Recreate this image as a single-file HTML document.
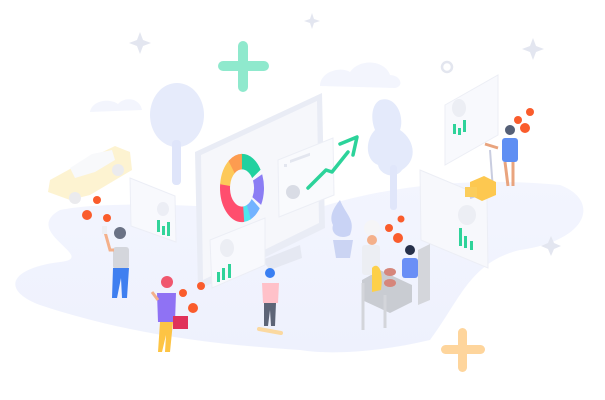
<!DOCTYPE html>
<html><head><meta charset="utf-8"><style>
html,body{margin:0;padding:0;background:#fff;width:605px;height:400px;overflow:hidden}
svg{display:block}
</style></head><body>
<svg width="605" height="400" viewBox="0 0 605 400" xmlns="http://www.w3.org/2000/svg">
<defs>
<linearGradient id="g" x1="0" y1="0" x2="0" y2="1"><stop offset="0" stop-color="#f3f5fe"/><stop offset="1" stop-color="#eef1fd"/></linearGradient>
</defs>
<!-- ground -->
<path d="M60 210 C110 200 220 205 300 215 C360 190 460 175 560 185 C600 200 590 240 520 250 C470 262 460 300 430 340 C380 352 330 355 300 350 C220 345 130 335 40 305 C0 290 10 268 60 262 C100 258 20 232 60 210Z" fill="url(#g)"/>
<!-- clouds -->
<path d="M320 86 C320 72 340 66 350 72 C360 58 385 60 390 75 C400 75 405 86 395 88 Z" fill="#f3f5fd"/>
<path d="M90 112 C92 100 110 98 118 104 C125 96 140 98 142 110 Z" fill="#f3f5fd"/>
<!-- sparkles -->
<g fill="#e3e6f0">
<path d="M140 32 l3 8 8 3 -8 3 -3 8 -3 -8 -8 -3 8 -3z"/>
<path d="M312 13 l2 6 6 2 -6 2 -2 6 -2 -6 -6 -2 6 -2z"/>
<path d="M533 38 l3 8 8 3 -8 3 -3 8 -3 -8 -8 -3 8 -3z"/>
<path d="M551 236 l3 7 7 3 -7 3 -3 7 -3 -7 -7 -3 7 -3z"/>
</g>
<circle cx="447" cy="67" r="5" fill="none" stroke="#e3e6ef" stroke-width="2.5"/>
<!-- plus signs -->
<g fill="#8fe9cd"><rect x="238" y="41" width="10" height="51" rx="5"/><rect x="218" y="61" width="51" height="10" rx="5"/></g>
<g fill="#fed59c"><rect x="458" y="328" width="9" height="44" rx="4.5"/><rect x="441" y="345" width="44" height="9" rx="4.5"/></g>
<!-- trees -->
<ellipse cx="177" cy="115" rx="27" ry="32" fill="#e6ebfb"/>
<rect x="172" y="140" width="9" height="45" rx="4" fill="#dfe5fa"/>
<path d="M380 100 C395 95 405 115 400 130 C415 140 418 160 402 170 C395 180 380 175 378 165 C365 160 365 140 375 130 C370 118 372 104 380 100Z" fill="#e4eafb"/>
<rect x="390" y="165" width="7" height="45" rx="3" fill="#e0e6fa"/>
<!-- taxi -->
<g opacity="0.85">
<path d="M50 180 L90 158 L115 146 L130 152 L132 170 L90 195 L70 200 L48 192Z" fill="#fdf1c9"/>
<path d="M70 168 L92 154 L112 150 L115 160 L95 172 L75 178Z" fill="#f7f8fb"/>
<circle cx="75" cy="198" r="6" fill="#e8e8ec"/><circle cx="118" cy="170" r="6" fill="#e8e8ec"/>
</g>
<!-- left card -->
<path d="M130 178 L175 196 L176 242 L131 226Z" fill="#f8f9fd" stroke="#eceef6"/>
<g fill="#33d49a"><rect x="157" y="220" width="3" height="12"/><rect x="162" y="226" width="3" height="9"/><rect x="167" y="222" width="3" height="14"/></g>
<ellipse cx="163" cy="209" rx="6" ry="7" fill="#eceef5"/>
<!-- monitor -->
<path d="M195 152 L322 93 L325 228 L198 290Z" fill="#e9ecf5"/>
<path d="M201 155 L317 101 L319 223 L203 280Z" fill="#f6f7fb"/>
<path d="M262 260 L300 245 L302 258 L270 270Z" fill="#e5e8f2"/>
<!-- donut -->
<g transform="translate(242,188) scale(1,1.55)">
<g fill="none" stroke-width="10">
<circle r="17" pathLength="360" stroke="#21d19f" stroke-dasharray="58 302" transform="rotate(-90)"/>
<circle r="17" pathLength="360" stroke="#8b7df4" stroke-dasharray="52 308" transform="rotate(-22)"/>
<circle r="17" pathLength="360" stroke="#72b3ff" stroke-dasharray="30 330" transform="rotate(38)"/>
<circle r="17" pathLength="360" stroke="#4ee6ee" stroke-dasharray="18 342" transform="rotate(68)"/>
<circle r="17" pathLength="360" stroke="#ff4e6e" stroke-dasharray="102 258" transform="rotate(86)"/>
<circle r="17" pathLength="360" stroke="#fdc95a" stroke-dasharray="46 314" transform="rotate(188)"/>
<circle r="17" pathLength="360" stroke="#fd9c50" stroke-dasharray="36 324" transform="rotate(234)"/>
</g></g>
<!-- right panel on monitor -->
<path d="M278 160 L333 138 L334 195 L279 217Z" fill="#f9fafd" stroke="#eceef5"/>
<g fill="#e3e6ef"><rect x="284" y="164" width="3" height="3"/><rect x="290" y="160" width="20" height="3" transform="skewY(-20)" transform-origin="290 160"/></g>
<circle cx="293" cy="192" r="7" fill="#d9dce5"/>
<path d="M308 188 L326 170 L332 172 L348 152" fill="none" stroke="#2cd39a" stroke-width="3.5" stroke-linecap="round" stroke-linejoin="round"/>
<path d="M340 144 L357 137 L353 155" fill="none" stroke="#2cd39a" stroke-width="3.5" stroke-linecap="round" stroke-linejoin="round"/>
<!-- lower card -->
<path d="M210 240 L265 218 L265 265 L212 288Z" fill="#f8f9fd" stroke="#eceef5"/>
<ellipse cx="227" cy="248" rx="7" ry="9" fill="#eceef4"/>
<g fill="#2fd39a"><rect x="217" y="272" width="3" height="10"/><rect x="222" y="268" width="3" height="12"/><rect x="228" y="264" width="3" height="14"/></g>
<!-- plant -->
<path d="M340 200 C346 215 356 220 350 235 C342 240 330 235 333 225 C328 215 336 205 340 200Z" fill="#c9d3f5"/>
<path d="M333 240 L353 240 L350 258 L336 258Z" fill="#cbd4f3"/>
<!-- top right card -->
<path d="M445 105 L498 75 L498 135 L445 165Z" fill="#f8f9fd" stroke="#eceef5"/>
<ellipse cx="459" cy="108" rx="7" ry="9" fill="#eceef4"/>
<g fill="#2fd39a"><rect x="453" y="124" width="3" height="10"/><rect x="458" y="128" width="3" height="7"/><rect x="463" y="120" width="3" height="12"/></g>
<!-- big right card -->
<path d="M420 170 L487 198 L488 268 L421 240Z" fill="#f7f8fc" stroke="#eceef5"/>
<ellipse cx="467" cy="215" rx="9" ry="10" fill="#eceef4"/>
<g fill="#2fd39a"><rect x="459" y="228" width="3" height="18"/><rect x="464" y="236" width="3" height="12"/><rect x="470" y="241" width="3" height="9"/></g>
<!-- coins -->
<g fill="#fa5c2c">
<circle cx="97" cy="200" r="4"/><circle cx="87" cy="215" r="5"/><circle cx="107" cy="218" r="4"/>
<circle cx="183" cy="293" r="4"/><circle cx="201" cy="286" r="4"/><circle cx="193" cy="308" r="5"/>
<circle cx="518" cy="120" r="4"/><circle cx="530" cy="112" r="4"/><circle cx="525" cy="128" r="5"/>
<circle cx="389" cy="228" r="4"/><circle cx="401" cy="219" r="3.5"/><circle cx="398" cy="238" r="5"/>
</g>
<!-- man with phone -->
<rect x="113" y="247" width="16" height="22" rx="3" fill="#d4d6dc"/>
<circle cx="120" cy="233" r="6" fill="#6b7285"/>
<path d="M113 268 L129 268 L127 298 L122 298 L121 278 L117 298 L112 298Z" fill="#3f7ff0"/>
<path d="M105 232 L110 250 L114 250" stroke="#f4b08a" stroke-width="3" fill="none"/>
<rect x="102" y="226" width="5" height="8" fill="#eceef3"/>
<!-- woman with basket -->
<circle cx="167" cy="282" r="6" fill="#f0576e"/>
<path d="M157 293 L176 293 L175 322 L158 322Z" fill="#8f72f4"/>
<path d="M160 322 L173 322 L170 352 L165 352 L166 335 L162 352 L158 352Z" fill="#fdc444"/>
<path d="M152 292 L158 300" stroke="#f4b08a" stroke-width="3"/>
<rect x="173" y="316" width="15" height="13" fill="#e0315a"/>
<!-- skater -->
<circle cx="270" cy="273" r="5" fill="#3a7ff2"/>
<path d="M262 283 L279 283 L278 303 L263 303Z" fill="#ffc1c9"/>
<path d="M264 303 L276 303 L275 326 L271 326 L270 310 L268 326 L264 326Z" fill="#5d6577"/>
<path d="M259 329 L281 333" stroke="#fbd9a0" stroke-width="4" stroke-linecap="round"/>
<!-- restaurant -->
<path d="M362 280 L380 270 L412 285 L412 302 L390 313 L362 300Z" fill="#c9ccd2"/>
<path d="M363 283 L363 330" stroke="#d3d5da" stroke-width="3"/><path d="M385 295 L385 328" stroke="#d3d5da" stroke-width="3"/>
<path d="M418 250 L430 244 L430 300 L418 305Z" fill="#d4d6db"/>
<circle cx="372" cy="228" r="8" fill="#f5f5f7"/>
<rect x="362" y="245" width="18" height="30" rx="3" fill="#eceef3"/>
<circle cx="372" cy="240" r="5" fill="#f4b08a"/>
<circle cx="410" cy="250" r="5" fill="#26304a"/>
<rect x="402" y="258" width="16" height="20" rx="3" fill="#6a8ff6"/>
<path d="M372 268 C377 262 384 268 381 290 L372 292Z" fill="#fdd04a"/>
<ellipse cx="390" cy="272" rx="6" ry="4" fill="#d6867b"/>
<ellipse cx="390" cy="283" rx="6" ry="4" fill="#d6867b"/>
<!-- cart woman -->
<circle cx="510" cy="130" r="5" fill="#556077"/>
<rect x="502" y="138" width="16" height="24" rx="3" fill="#5f8ff3"/>
<path d="M505 162 L508 186 M513 162 L513 186" stroke="#e9a47e" stroke-width="3"/>
<path d="M498 148 L485 144" stroke="#e9a47e" stroke-width="3"/>
<path d="M490 150 L493 190 L470 198" stroke="#c9cde0" stroke-width="2" fill="none"/>
<path d="M470 182 L484 176 L496 182 L496 195 L482 201 L470 195Z" fill="#fdc850"/>
<rect x="465" y="187" width="12" height="10" fill="#fbcd5b"/>
</svg>
</body></html>
